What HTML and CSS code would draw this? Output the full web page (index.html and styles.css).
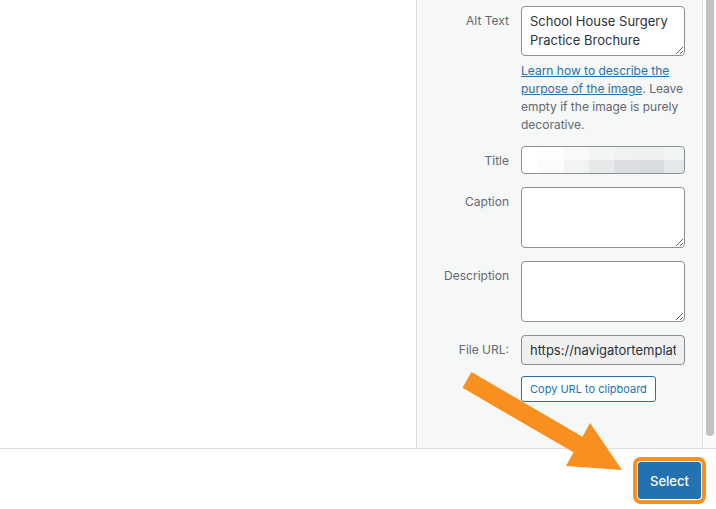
FILE: index.html
```html
<!DOCTYPE html>
<html lang="en">
<head>
    <meta charset="UTF-8">
    <meta name="viewport" content="width=device-width, initial-scale=1.0">
    <title>Attachment Details</title>
    <link rel="stylesheet" href="styles.css">
</head>
<body>
    <div class="modal">
        <div class="frame">
            <div class="browser"></div>

            <div class="sidebar">
                <div class="details">
                    <div class="setting first">
                        <label class="name" for="alt">Alt Text</label>
                        <div class="field">
                            <textarea id="alt" class="alt-text">School House Surgery Practice Brochure</textarea>
                            <p class="help"><a href="#">Learn how to describe the purpose of the image</a>. Leave empty if the image is purely decorative.</p>
                        </div>
                    </div>

                    <div class="setting">
                        <label class="name" for="title">Title</label>
                        <div class="field">
                            <input id="title" class="blurred" type="text" value="">
                        </div>
                    </div>

                    <div class="setting">
                        <label class="name" for="caption">Caption</label>
                        <div class="field">
                            <textarea id="caption" class="tall"></textarea>
                        </div>
                    </div>

                    <div class="setting">
                        <label class="name" for="description">Description</label>
                        <div class="field">
                            <textarea id="description" class="tall"></textarea>
                        </div>
                    </div>

                    <div class="setting">
                        <label class="name" for="url">File URL:</label>
                        <div class="field">
                            <input id="url" class="readonly" type="text" readonly value="https://navigatortemplates.co.uk/wp-content/uploads/brochure.pdf">
                            <button class="copy">Copy URL to clipboard</button>
                        </div>
                    </div>
                </div>
                <div class="scrollbar"><div class="thumb"></div></div>
            </div>
        </div>

        <div class="toolbar">
            <button class="select">Select</button>
        </div>

        <!-- orange pointer added on top of the screenshot -->
        <svg class="pointer" width="716" height="509" viewBox="0 0 716 509">
            <polygon points="471.5,372 582.5,436.7 590,423 622,470 566,466 573.5,452.3 462.5,387.8" fill="#f7901e"/>
        </svg>
    </div>
</body>
</html>
```

FILE: styles.css
```css
body {
    margin: 0;
    font-family: Inter, "Noto Sans", sans-serif;
    color: #2c3338;
    background-color: #fff;
}
.modal {
    position: relative;
    width: 716px;
    height: 509px;
    overflow: hidden;
}
.frame {
    display: flex;
    height: 448px;
    border-bottom: 1px solid #dcdcde;
}
.browser {
    flex: 1;
    background-color: #fff;
}
.sidebar {
    display: flex;
    width: 299px;
    border-left: 1px solid #dcdcde;
    background-color: #f6f7f7;
}
.details {
    flex: 1;
    padding: 6px 17px 0 0;
    border-right: 1px solid #e4e4e4;
}
.scrollbar {
    width: 13px;
    background-color: #fafafa;
    padding: 0 2px 0 3px;
    box-sizing: border-box;
}
.thumb {
    height: 436px;
    background-color: #c1c1c1;
    border-radius: 0 0 4px 4px;
}
.setting {
    display: grid;
    grid-template-columns: 92px 164px;
    column-gap: 12px;
    margin-bottom: 13px;
}
.setting.first {
    margin-bottom: 12px;
}
.name {
    text-align: right;
    font-size: 12px;
    line-height: 18px;
    color: #646970;
    padding-top: 6px;
}
.field {
    display: flex;
    flex-direction: column;
    align-items: flex-start;
}
textarea,
input {
    box-sizing: border-box;
    width: 164px;
    margin: 0;
    font-family: Inter, "Noto Sans", sans-serif;
    font-size: 13px;
    color: #2c3338;
    background-color: #fff;
    border: 1px solid #8c8f94;
    border-radius: 4px;
    outline: none;
}
textarea {
    display: block;
    padding: 5px 8px 3px;
    line-height: 19px;
    resize: vertical;
}
.alt-text {
    height: 50px;
    overflow: hidden;
}
.tall {
    height: 61px;
}
input {
    height: 29px;
    padding: 0 8px;
}
.blurred {
    height: 28px;
    background:
        linear-gradient(to right, #fff 0 16px, #fdfdfd 16px 42px, #f9f9f9 42px 67px, #f3f4f5 67px 92px, #f0f1f2 92px 117px, #eff0f1 117px 142px, #f3f4f4 142px) top / 100% 50% no-repeat,
        linear-gradient(to right, #fff 0 16px, #fbfbfb 16px 42px, #f2f3f3 42px 67px, #e7e8ea 67px 92px, #dcdee1 92px 117px, #d9dcdf 117px 142px, #e6e7e9 142px) bottom / 100% 50% no-repeat;
}
.readonly {
    height: 30px;
    background-color: #f0f0f1;
    font-size: 13px;
}
.help {
    margin: 6px 0 0;
    font-size: 12px;
    line-height: 18px;
    color: #646970;
}
.help a {
    color: #2271b1;
}
.copy {
    margin-top: 11px;
    height: 26px;
    padding: 0 8px;
    font-family: Inter, "Noto Sans", sans-serif;
    font-size: 11px;
    color: #2271b1;
    background-color: #fff;
    border: 1px solid #2271b1;
    border-radius: 3px;
    cursor: pointer;
}
.toolbar {
    display: flex;
    justify-content: flex-end;
    align-items: flex-start;
    height: 60px;
    padding: 13px 15px 0 0;
    box-sizing: border-box;
}
.select {
    width: 63px;
    height: 37px;
    font-family: Inter, "Noto Sans", sans-serif;
    font-size: 13px;
    font-weight: 500;
    color: #fff;
    background-color: #2271b1;
    border: none;
    border-radius: 3px;
    box-shadow: 0 0 0 1px #fff, 0 0 0 5px #f7901e;
    cursor: pointer;
}
.pointer {
    position: absolute;
    left: 0;
    top: 0;
    pointer-events: none;
}
```
